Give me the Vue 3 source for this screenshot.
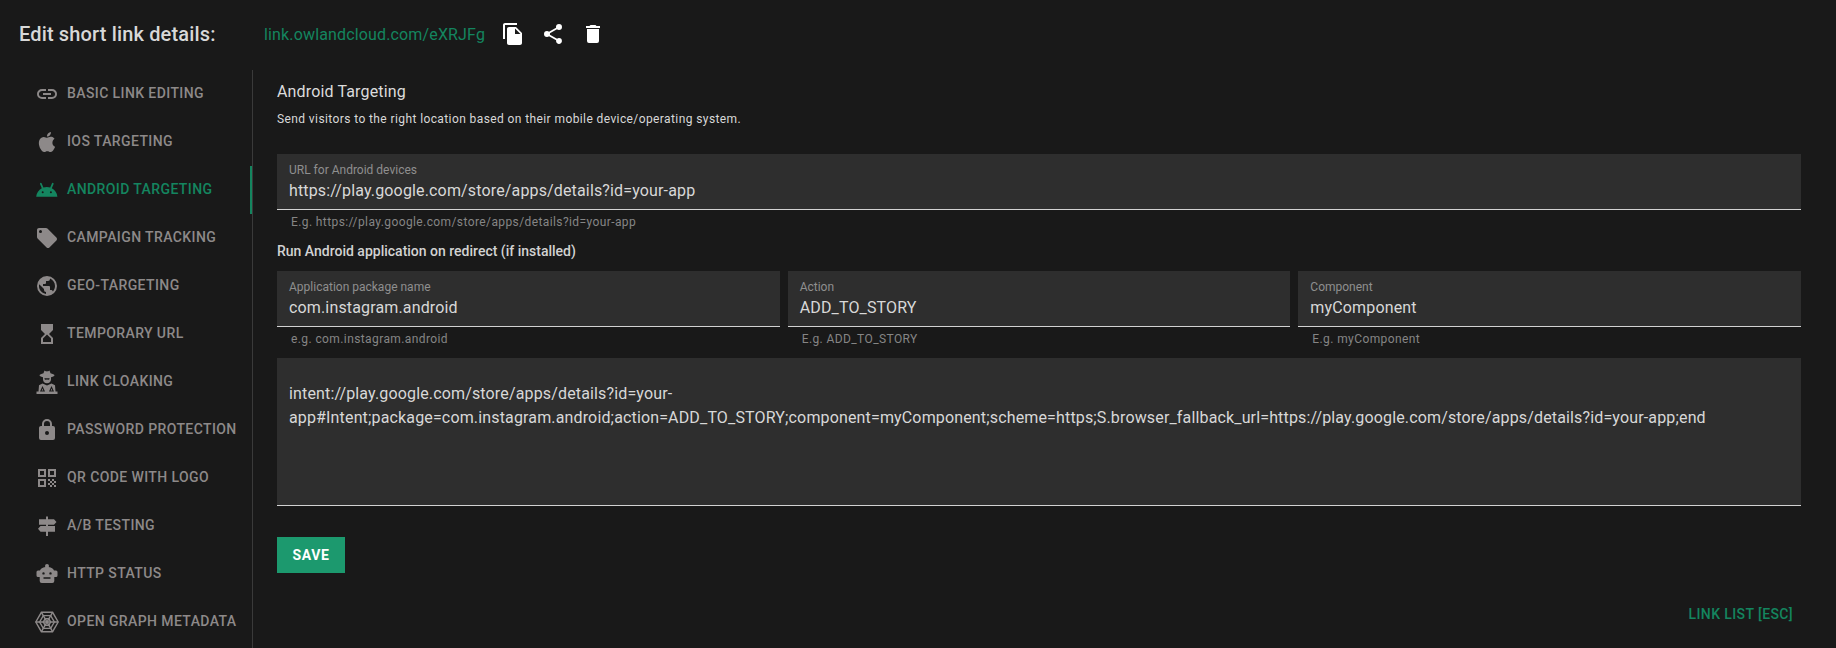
<script setup>
const nav = [
  { label: 'Basic link editing', d: 'M3.9,12C3.9,10.29 5.29,8.9 7,8.9H11V7H7A5,5 0 0,0 2,12A5,5 0 0,0 7,17H11V15.1H7C5.29,15.1 3.9,13.71 3.9,12M8,13H16V11H8V13M17,7H13V8.9H17C18.71,8.9 20.1,10.29 20.1,12C20.1,13.71 18.71,15.1 17,15.1H13V17H17A5,5 0 0,0 22,12A5,5 0 0,0 17,7Z' },
  { label: 'iOS targeting', d: 'M18.71,19.5C17.88,20.74 17,21.95 15.66,21.97C14.32,22 13.89,21.18 12.37,21.18C10.84,21.18 10.37,21.95 9.1,22C7.79,22.05 6.8,20.68 5.96,19.47C4.25,17 2.94,12.45 4.7,9.39C5.57,7.87 7.13,6.91 8.82,6.88C10.1,6.86 11.32,7.75 12.11,7.75C12.89,7.75 14.37,6.68 15.92,6.84C16.57,6.87 18.39,7.1 19.56,8.82C19.47,8.88 17.39,10.1 17.41,12.63C17.44,15.65 20.06,16.66 20.09,16.67C20.06,16.74 19.67,18.11 18.71,19.5M13,3.5C13.73,2.67 14.94,2.04 15.94,2C16.07,3.17 15.6,4.35 14.9,5.19C14.21,6.04 13.07,6.7 11.95,6.61C11.8,5.46 12.36,4.26 13,3.5Z' },
  { label: 'Android targeting', active: true, d: 'M1.2,18.8C1.5,14.9 3.7,11.9 6.8,10.3L5,6.1C4.8,5.6 5,5.1 5.4,4.9C5.9,4.7 6.4,4.9 6.6,5.3L8.4,9.6C9.5,9.2 10.6,9 11.8,9C13,9 14.2,9.2 15.2,9.6L17,5.3C17.2,4.9 17.7,4.7 18.2,4.9C18.6,5.1 18.8,5.6 18.6,6.1L16.8,10.3C19.9,11.9 22.1,14.9 22.4,18.8ZM7.7,13.3A1,1 0 0,0 6.7,14.3A1,1 0 0,0 7.7,15.3A1,1 0 0,0 8.7,14.3A1,1 0 0,0 7.7,13.3ZM15.9,13.3A1,1 0 0,0 14.9,14.3A1,1 0 0,0 15.9,15.3A1,1 0 0,0 16.9,14.3A1,1 0 0,0 15.9,13.3Z' },
  { label: 'Campaign tracking', d: 'M5.5,7A1.5,1.5 0 0,1 4,5.5A1.5,1.5 0 0,1 5.5,4A1.5,1.5 0 0,1 7,5.5A1.5,1.5 0 0,1 5.5,7M21.41,11.58L12.41,2.58C12.05,2.22 11.55,2 11,2H4C2.89,2 2,2.89 2,4V11C2,11.55 2.22,12.05 2.59,12.41L11.58,21.41C11.95,21.77 12.45,22 13,22C13.55,22 14.05,21.77 14.41,21.41L21.41,14.41C21.78,14.05 22,13.55 22,13C22,12.44 21.77,11.94 21.41,11.58Z' },
  { label: 'Geo-targeting', d: 'M17.9,17.39C17.64,16.59 16.89,16 16,16H15V13A1,1 0 0,0 14,12H8V10H10A1,1 0 0,0 11,9V7H13A2,2 0 0,0 15,5V4.59C17.93,5.77 20,8.64 20,12C20,14.08 19.2,15.97 17.9,17.39M11,19.93C7.05,19.44 4,16.08 4,12C4,11.38 4.08,10.78 4.21,10.21L9,15V16A2,2 0 0,0 11,18M12,2A10,10 0 0,0 2,12A10,10 0 0,0 12,22A10,10 0 0,0 22,12A10,10 0 0,0 12,2Z' },
  { label: 'Temporary URL', d: 'M6,2L6.01,8L10,12L6.01,16.01L6,22H18V16L14,12L18,8.01V2H6ZM16,16.5V20H8V16.5L12,12.5L16,16.5Z' },
  { label: 'Link cloaking', d: 'M8.5,3.2L9.5,0.5C10.5,1.2 11.2,1.4 12,1.4C12.8,1.4 13.5,1.2 14.5,0.5L15.5,3.2C17.5,3.7 19.5,4.4 19.5,5.2C19.5,6.2 17,6.9 16,7.2V9.5C16,11.7 14.2,13.3 12,13.3C9.8,13.3 8,11.7 8,9.5V7.2C7,6.9 4.5,6.2 4.5,5.2C4.5,4.4 6.5,3.7 8.5,3.2ZM9.6,8V9.2C10.6,10 11.3,9.9 12,9.2C12.7,9.9 13.4,10 14.4,9.2V8C12.8,8.3 11.2,8.3 9.6,8ZM7.5,13.6L12,15.6L16.5,13.6L20,15.2L20.5,21.5H22.5V24H1.5V21.5H3.5L4,15.2ZM7.5,16L5,21.5H10ZM7.5,18.6L8.3,20.4H6.7ZM16.5,16L14,21.5H19ZM16.5,18.6L17.3,20.4H15.7Z' },
  { label: 'Password protection', d: 'M12,17A2,2 0 0,0 14,15C14,13.89 13.1,13 12,13A2,2 0 0,0 10,15A2,2 0 0,0 12,17M18,8A2,2 0 0,1 20,10V20A2,2 0 0,1 18,22H6A2,2 0 0,1 4,20V10C4,8.89 4.9,8 6,8H7V6A5,5 0 0,1 12,1A5,5 0 0,1 17,6V8H18M12,3A3,3 0 0,0 9,6V8H15V6A3,3 0 0,0 12,3Z' },
  { label: 'QR code with logo', d: 'M3,3H11V11H3V3M5,5V9H9V5H5M13,3H21V11H13V3M15,5V9H19V5H15M3,13H11V21H3V13M5,15V19H9V15H5M13,13H15V15H13V13M17,13H19V15H17V13M15,15H17V17H15V15M19,15H21V17H19V15M13,17H15V19H13V17M17,17H19V19H17V17M15,19H17V21H15V19M19,19H21V21H19V19Z' },
  { label: 'A/B testing', d: 'M11,2.5H13V5.3H19L21.5,8L19,10.7H13V12H20V17.7H13V22H11V17.7H5.5L3,14.85L5.5,12H11V10.7H4V5.3H11V2.5Z' },
  { label: 'HTTP status', d: 'M12,2A2,2 0 0,1 14,4C14,4.4 13.9,4.8 13.6,5.1C16.5,5.6 18.4,7 19,8.5H21A1.5,1.5 0 0,1 22.5,10V13.5A1.5,1.5 0 0,1 21,15H19.3V19A2,2 0 0,1 17.3,21H6.7A2,2 0 0,1 4.7,19V15H3A1.5,1.5 0 0,1 1.5,13.5V10A1.5,1.5 0 0,1 3,8.5H5C5.6,7 7.5,5.6 10.4,5.1C10.1,4.8 10,4.4 10,4A2,2 0 0,1 12,2M8.5,10.2A1.2,1.2 0 0,0 7.3,11.4A1.2,1.2 0 0,0 8.5,12.6A1.2,1.2 0 0,0 9.7,11.4A1.2,1.2 0 0,0 8.5,10.2M15.5,10.2A1.2,1.2 0 0,0 14.3,11.4A1.2,1.2 0 0,0 15.5,12.6A1.2,1.2 0 0,0 16.7,11.4A1.2,1.2 0 0,0 15.5,10.2M8.5,15.2V16.7H15.5V15.2H8.5Z' },
  { label: 'Open Graph metadata', web: true }
]
const rings = [11.2, 7.4, 3.7]
const hex = (r) => [0, 60, 120, 180, 240, 300].map((a) => {
  const t = (a * Math.PI) / 180
  return `${(12 + r * Math.cos(t)).toFixed(2)},${(12 + r * Math.sin(t)).toFixed(2)}`
}).join(' ')
</script>

<template>
  <div class="page">
    <header class="top">
      <h1 class="title">Edit short link details:</h1>
      <a class="short">link.owlandcloud.com/eXRJFg</a>
      <div class="actions">
        <svg viewBox="0 0 24 24" class="act"><path d="M16 1H4c-1.1 0-2 .9-2 2v14h2V3h12V1zm-1 4l6 6v10c0 1.1-.9 2-2 2H7.99C6.89 23 6 22.1 6 21l.01-14c0-1.1.89-2 1.99-2h7zm-1 7h5.5L14 6.5V12z" /></svg>
        <svg viewBox="0 0 24 24" class="act"><path d="M18,16.08C17.24,16.08 16.56,16.38 16.04,16.85L8.91,12.7C8.96,12.47 9,12.24 9,12C9,11.76 8.96,11.53 8.91,11.3L15.96,7.19C16.5,7.69 17.21,8 18,8A3,3 0 0,0 21,5A3,3 0 0,0 18,2A3,3 0 0,0 15,5C15,5.24 15.04,5.47 15.09,5.7L8.04,9.81C7.5,9.31 6.79,9 6,9A3,3 0 0,0 3,12A3,3 0 0,0 6,15C6.79,15 7.5,14.69 8.04,14.19L15.16,18.34C15.11,18.55 15.08,18.77 15.08,19C15.08,20.61 16.39,21.91 18,21.91C19.61,21.91 20.92,20.61 20.92,19A2.92,2.92 0 0,0 18,16.08Z" /></svg>
        <svg viewBox="0 0 24 24" class="act"><path d="M19,4H15.5L14.5,3H9.5L8.5,4H5V6H19M6,19A2,2 0 0,0 8,21H16A2,2 0 0,0 18,19V7H6V19Z" /></svg>
      </div>
    </header>
    <div class="body">
      <nav class="nav">
        <div v-for="item in nav" :key="item.label" class="item" :class="{ active: item.active }">
          <svg viewBox="0 0 24 24" class="ico">
            <path v-if="item.d" :d="item.d" fill-rule="evenodd" />
            <g v-else fill="none" stroke="currentColor" stroke-width="1.4">
              <polygon v-for="r in rings" :key="r" :points="hex(r)" />
              <path d="M0.8 12H23.2M6.4 2.3L17.6 21.7M17.6 2.3L6.4 21.7" />
            </g>
          </svg>
          <span class="lbl">{{ item.label }}</span>
        </div>
      </nav>
      <main class="main">
        <h2 class="head">Android Targeting</h2>
        <p class="sub">Send visitors to the right location based on their mobile device/operating system.</p>
        <div class="field">
          <label>URL for Android devices</label>
          <div class="val">https://play.google.com/store/apps/details?id=your-app</div>
        </div>
        <div class="hint">E.g. https://play.google.com/store/apps/details?id=your-app</div>
        <div class="run">Run Android application on redirect (if installed)</div>
        <div class="cols">
          <div>
            <div class="field"><label>Application package name</label><div class="val">com.instagram.android</div></div>
            <div class="hint">e.g. com.instagram.android</div>
          </div>
          <div>
            <div class="field"><label>Action</label><div class="val">ADD_TO_STORY</div></div>
            <div class="hint">E.g. ADD_TO_STORY</div>
          </div>
          <div>
            <div class="field"><label>Component</label><div class="val">myComponent</div></div>
            <div class="hint">E.g. myComponent</div>
          </div>
        </div>
        <div class="area">intent://play.google.com/store/apps/details?id=your-app#Intent;package=com.instagram.android;action=ADD_TO_STORY;component=myComponent;scheme=https;S.browser_fallback_url=https://play.google.com/store/apps/details?id=your-app;end</div>
        <button class="save">Save</button>
        <div class="foot"><a class="list">Link list [ESC]</a></div>
      </main>
    </div>
  </div>
</template>

<style scoped>
.page {
  height: 648px;
  overflow: hidden;
  background: #191919;
  font-family: Roboto, "Liberation Sans", sans-serif;
  color: #e6e6e6;
}
.top {
  height: 70px;
  display: flex;
  align-items: center;
  padding: 0 0 2px 19px;
  box-sizing: border-box;
}
.title {
  margin: 0;
  width: 245px;
  font-size: 20px;
  font-weight: 500;
  line-height: 32px;
  letter-spacing: 0.15px;
  color: #d8d8d8;
}
.short {
  width: 237px;
  font-size: 16px;
  letter-spacing: 0.15px;
  color: #14855f;
}
.actions {
  display: flex;
  gap: 16px;
}
.act {
  width: 24px;
  height: 24px;
  fill: #fff;
}
.body {
  display: flex;
  height: 578px;
}
.nav {
  width: 253px;
  flex: none;
  box-sizing: border-box;
  border-right: 1px solid #3a3a3a;
}
.item {
  position: relative;
  height: 48px;
  display: flex;
  align-items: center;
  padding-left: 35px;
  gap: 8px;
  color: #8d8989;
  font-size: 14px;
  font-weight: 500;
  letter-spacing: 0.4px;
  text-transform: uppercase;
}
.lbl {
  margin-bottom: 2px;
}
.item.active {
  color: #14855f;
}
.item.active::after {
  content: "";
  position: absolute;
  right: 0;
  top: 0;
  bottom: 0;
  width: 2px;
  background: #14855f;
}
.ico {
  width: 24px;
  height: 24px;
  flex: none;
  fill: currentColor;
}
.main {
  flex: 1;
  min-width: 0;
  padding: 0 35px 0 24px;
}
.head {
  margin: 0;
  padding-top: 10px;
  font-size: 16px;
  font-weight: 400;
  line-height: 24px;
  letter-spacing: 0.15px;
  color: #dcdcdc;
}
.sub {
  margin: 3px 0 23px;
  font-size: 12px;
  line-height: 24px;
  letter-spacing: 0.4px;
  color: #d8d8d8;
}
.field {
  height: 56px;
  box-sizing: border-box;
  background: #2e2e2e;
  border-bottom: 1px solid #d2d2d2;
  padding: 10px 12px 0;
}
.field label {
  display: block;
  font-size: 12px;
  line-height: 12px;
  color: #8f8f8f;
}
.val {
  margin-top: 3px;
  font-size: 16px;
  line-height: 24px;
  letter-spacing: 0.15px;
  color: #d8d8d8;
}
.hint {
  height: 24px;
  padding: 0 14px;
  font-size: 12px;
  line-height: 24px;
  letter-spacing: 0.4px;
  color: #858585;
}
.run {
  margin-top: 5px;
  font-size: 14px;
  font-weight: 500;
  line-height: 24px;
  color: #d2d2d2;
}
.cols {
  display: grid;
  grid-template-columns: repeat(3, 1fr);
  gap: 8px;
  margin-top: 8px;
}
.area {
  margin-top: 7px;
  height: 148px;
  box-sizing: border-box;
  background: #2e2e2e;
  border-bottom: 1px solid #d2d2d2;
  padding: 24px 12px 0;
  font-size: 16px;
  line-height: 24px;
  letter-spacing: 0.15px;
  color: #d8d8d8;
}
.save {
  display: block;
  margin-top: 31px;
  width: 68px;
  height: 36px;
  padding: 0;
  border: 0;
  background: #1c996e;
  color: #fff;
  font-family: inherit;
  font-size: 14px;
  font-weight: 700;
  letter-spacing: 0.6px;
  text-transform: uppercase;
}
.foot {
  display: flex;
  justify-content: flex-end;
  padding: 32px 8px 0 0;
}
.list {
  font-size: 14px;
  font-weight: 500;
  line-height: 18px;
  letter-spacing: 0.4px;
  text-transform: uppercase;
  color: #14855f;
}
</style>
